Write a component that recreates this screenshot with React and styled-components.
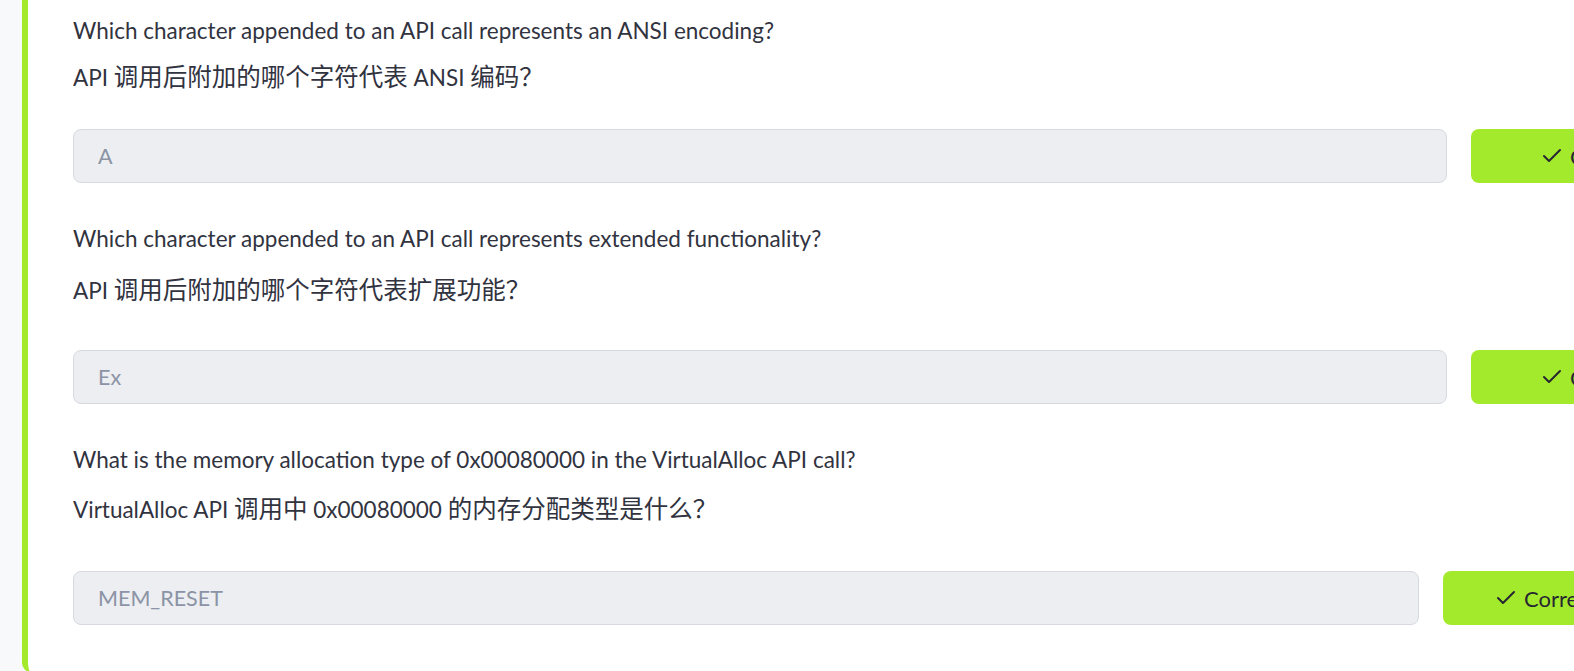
import React from 'react';
import styled, { createGlobalStyle } from 'styled-components';
import { Check } from 'lucide-react';

// Base page styles
const GlobalStyle = createGlobalStyle`
  html, body {
    margin: 0;
    padding: 0;
    height: 100%;
    overflow: hidden;
    background: #f8f9fb;
  }
  body {
    font-family: Lato, "Noto Sans CJK SC", sans-serif;
    color: #31333f;
  }
`;

const Page = styled.div`
  height: 671px;
  padding-left: 22px;
  box-sizing: border-box;
  overflow: hidden;
`;

// Card with the lime accent on the left
const Card = styled.section`
  width: 1704px;
  box-sizing: border-box;
  background: #ffffff;
  border-left: 6px solid #a4ea2c;
  border-bottom-left-radius: 9px;
  padding: 15px 0 47px 45px;
  display: flex;
  flex-direction: column;
  gap: 40px;
`;

const QuestionBlock = styled.div`
  display: flex;
  flex-direction: column;
`;

const QuestionText = styled.p`
  margin: 0;
  height: 32px;
  font-size: 22.5px;
  line-height: 32px;
  white-space: nowrap;
  margin-bottom: ${(p) => p.$after}px;
`;

// CJK runs render a touch larger than the latin text around them
const CjkRun = styled.span`
  font-family: "Noto Sans CJK SC", sans-serif;
  font-size: 24.5px;
  line-height: 20px;
`;

const AnswerRow = styled.div`
  display: flex;
  align-items: stretch;
  gap: 24px;
  height: 54px;
`;

const AnswerInput = styled.input`
  flex: 1;
  min-width: 0;
  box-sizing: border-box;
  height: 54px;
  border: 1px solid #d6d9df;
  border-radius: 8px;
  background: #eceef2;
  padding: 0 24px;
  font-family: Lato, "Noto Sans CJK SC", sans-serif;
  font-size: 21.5px;
  color: #8b93a4;
  -webkit-text-fill-color: #8b93a4;
  opacity: 1;
  outline: none;
`;

const ResultButton = styled.button`
  flex: 0 0 ${(p) => p.$width}px;
  box-sizing: border-box;
  height: 54px;
  border: none;
  border-radius: 8px;
  background: #a4ea2c;
  color: #262730;
  display: flex;
  align-items: center;
  gap: 6px;
  padding: 0 0 0 ${(p) => p.$pad}px;
  font-family: Lato, "Noto Sans CJK SC", sans-serif;
  font-size: 22px;
  cursor: default;
`;

const questions = [
  {
    en: 'Which character appended to an API call represents an ANSI encoding?',
    zh: 'API 调用后附加的哪个字符代表 ANSI 编码？',
    answer: 'A',
    enGap: 15,
    zhGap: 35,
    btnWidth: 255,
    btnPad: 69,
  },
  {
    en: 'Which character appended to an API call represents extended functionality?',
    zh: 'API 调用后附加的哪个字符代表扩展功能？',
    answer: 'Ex',
    enGap: 20,
    zhGap: 43,
    btnWidth: 255,
    btnPad: 69,
  },
  {
    en: 'What is the memory allocation type of 0x00080000 in the VirtualAlloc API call?',
    zh: 'VirtualAlloc API 调用中 0x00080000 的内存分配类型是什么？',
    answer: 'MEM_RESET',
    enGap: 18,
    zhGap: 45,
    btnWidth: 283,
    btnPad: 51,
  },
];

const cjkPattern = /([\u3000-\u9fff\uff00-\uffef]+)/;

// Split a mixed line so CJK runs get their own span
const renderMixed = (text) =>
  text.split(cjkPattern).map((part, i) =>
    cjkPattern.test(part) ? <CjkRun key={i}>{part}</CjkRun> : part
  );

const App = () => (
  <>
    <GlobalStyle />
    <Page>
      <Card>
        {questions.map((q) => (
          <QuestionBlock key={q.answer}>
            <QuestionText $after={q.enGap}>{q.en}</QuestionText>
            <QuestionText $after={q.zhGap}>{renderMixed(q.zh)}</QuestionText>
            <AnswerRow>
              <AnswerInput disabled value={q.answer} readOnly />
              <ResultButton $width={q.btnWidth} $pad={q.btnPad}>
                <Check size={24} strokeWidth={2} />
                Correct
              </ResultButton>
            </AnswerRow>
          </QuestionBlock>
        ))}
      </Card>
    </Page>
  </>
);

export default App;
